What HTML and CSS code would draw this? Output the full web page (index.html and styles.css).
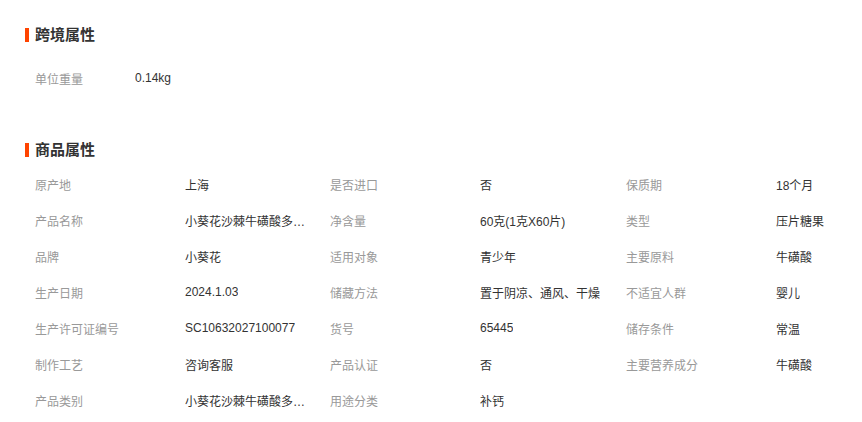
FILE: index.html
```html
<!DOCTYPE html>
<html lang="zh-CN">
<head>
<meta charset="utf-8">
<title>商品属性</title>
<link rel="stylesheet" href="styles.css">
</head>
<body>
<div class="page">
  <section class="sec sec-cross">
    <h2 class="title"><span class="bar"></span>跨境属性</h2>
    <div class="rows">
      <div class="item narrow"><span class="label">单位重量</span><span class="value">0.14kg</span></div>
    </div>
  </section>
  <section class="sec sec-goods">
    <h2 class="title"><span class="bar"></span>商品属性</h2>
    <div class="grid">
      <div class="item"><span class="label">原产地</span><span class="value">上海</span></div>
      <div class="item"><span class="label">是否进口</span><span class="value">否</span></div>
      <div class="item"><span class="label">保质期</span><span class="value">18个月</span></div>

      <div class="item"><span class="label">产品名称</span><span class="value" title="小葵花沙棘牛磺酸多维片">小葵花沙棘牛磺酸多维片</span></div>
      <div class="item"><span class="label">净含量</span><span class="value">60克(1克X60片)</span></div>
      <div class="item"><span class="label">类型</span><span class="value">压片糖果</span></div>

      <div class="item"><span class="label">品牌</span><span class="value">小葵花</span></div>
      <div class="item"><span class="label">适用对象</span><span class="value">青少年</span></div>
      <div class="item"><span class="label">主要原料</span><span class="value">牛磺酸</span></div>

      <div class="item"><span class="label">生产日期</span><span class="value">2024.1.03</span></div>
      <div class="item"><span class="label">储藏方法</span><span class="value wide">置于阴凉、通风、干燥</span></div>
      <div class="item"><span class="label">不适宜人群</span><span class="value">婴儿</span></div>

      <div class="item"><span class="label">生产许可证编号</span><span class="value">SC10632027100077</span></div>
      <div class="item"><span class="label">货号</span><span class="value">65445</span></div>
      <div class="item"><span class="label">储存条件</span><span class="value">常温</span></div>

      <div class="item"><span class="label">制作工艺</span><span class="value">咨询客服</span></div>
      <div class="item"><span class="label">产品认证</span><span class="value">否</span></div>
      <div class="item"><span class="label">主要营养成分</span><span class="value">牛磺酸</span></div>

      <div class="item"><span class="label">产品类别</span><span class="value" title="小葵花沙棘牛磺酸多维片">小葵花沙棘牛磺酸多维片</span></div>
      <div class="item"><span class="label">用途分类</span><span class="value">补钙</span></div>
    </div>
  </section>
</div>
</body>
</html>
```

FILE: styles.css
```css
html, body {
  margin: 0;
  padding: 0;
  background: #fff;
}
body {
  font-family: "Liberation Sans", "Noto Sans CJK SC", sans-serif;
  font-size: 12px;
  color: #333;
}
.page {
  padding: 25px 0 0 25px;
}
.title {
  display: flex;
  align-items: center;
  gap: 6px;
  margin: 0;
  height: 20px;
  line-height: 20px;
  font-size: 15px;
  font-weight: bold;
  color: #333;
}
.bar {
  display: block;
  width: 4px;
  height: 14px;
  background: #ff4400;
}
.rows, .grid {
  padding-left: 10px;
}
.sec-cross .rows {
  margin-top: 15px;
}
.sec-goods {
  margin-top: 44px;
}
.sec-goods .grid {
  margin-top: 6px;
  display: grid;
  grid-template-columns: 295px 296px 1fr;
  grid-auto-rows: 36px;
}
.item {
  display: flex;
  align-items: center;
  height: 36px;
}
.label {
  flex: none;
  width: 150px;
  color: #999;
  white-space: nowrap;
}
.narrow .label {
  width: 100px;
}
.value {
  max-width: 122px;
  white-space: nowrap;
  overflow: hidden;
  text-overflow: ellipsis;
  color: #333;
}
.value.wide {
  max-width: 140px;
}
```
